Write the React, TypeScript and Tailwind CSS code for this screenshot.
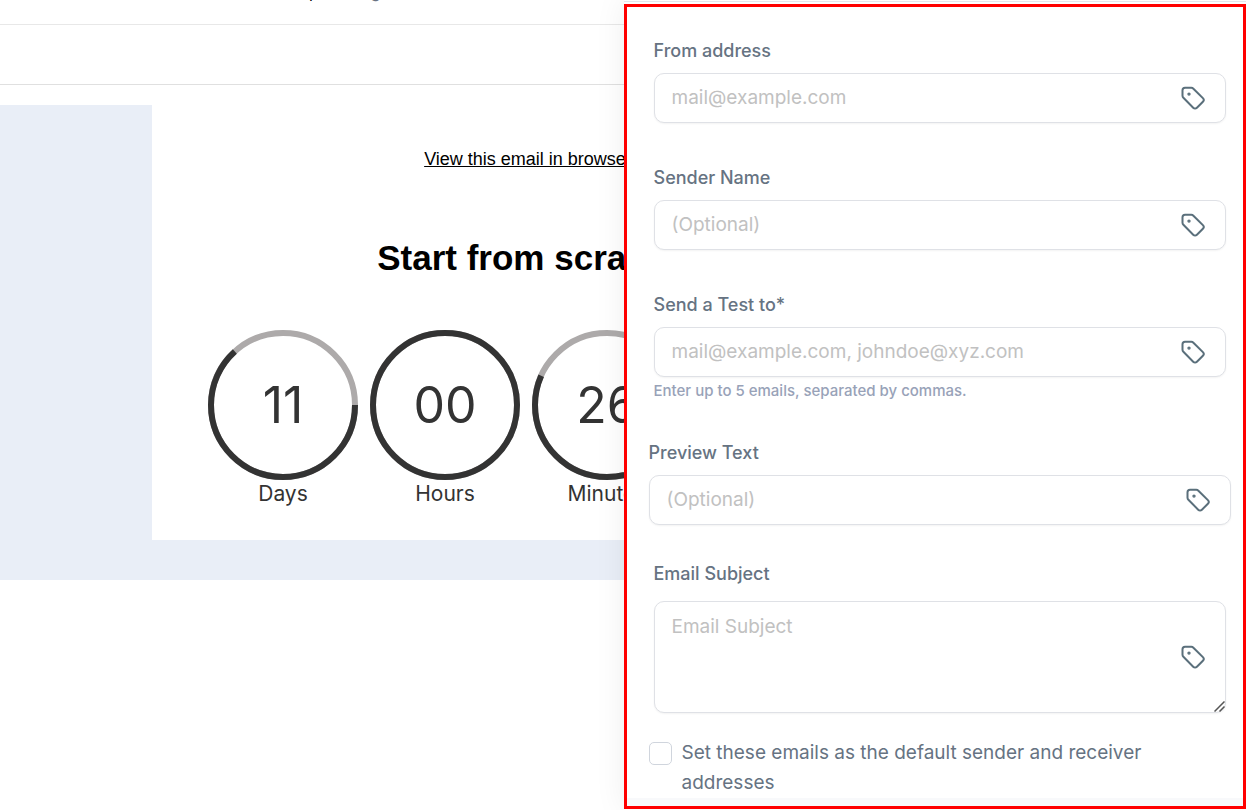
import React from "react";

const timers = [
  { value: "11", label: "Days", angle: 228 },
  { value: "00", label: "Hours", angle: 360 },
  { value: "26", label: "Minutes", angle: 204 },
  { value: "42", label: "Seconds", angle: 108 },
];

const TagIcon = () => (
  <svg
    width="26"
    height="26"
    viewBox="0 0 26 26"
    fill="none"
    stroke="#5a6f7b"
    strokeWidth="2"
    strokeLinecap="round"
    strokeLinejoin="round"
  >
    <path d="M2.5 5.3v5.4c0 .9.3 1.5.9 2.1l9.8 9.9c1.1 1.1 2.6 1.1 3.7 0l6-6c1.1-1.1 1.1-2.5 0-3.6L13.4 3.7c-.6-.6-1.2-.9-2.1-.9H5c-1.5 0-2.5 1-2.5 2.5Z" />
    <circle cx="9" cy="9.1" r="0.7" fill="#5a6f7b" />
  </svg>
);

type FieldProps = {
  id: string;
  label: string;
  placeholder: string;
  help?: string;
};

const Field = ({ id, label, placeholder, help }: FieldProps) => (
  <div className="flex flex-col">
    <label htmlFor={id} className="text-[18px] leading-6 font-medium text-[#667382]">
      {label}
    </label>
    <div className="mt-[10px] flex h-[50px] items-center rounded-[10px] border border-[#dfe1e6] bg-white pr-[19px] pl-[17px] shadow-xs">
      <input
        id={id}
        type="text"
        placeholder={placeholder}
        className="min-w-0 flex-1 text-[19px] text-[#667382] outline-none placeholder:text-[#c1c1c1]"
      />
      <button type="button" aria-label={`Insert tag in ${label}`}>
        <TagIcon />
      </button>
    </div>
    {help && (
      <p className="mt-1 text-[15px] leading-5 font-medium text-[#98a2b8]">{help}</p>
    )}
  </div>
);

const Timer = ({ value, label, angle }: { value: string; label: string; angle: number }) => (
  <div className="flex w-[150px] shrink-0 flex-col items-center text-[#333333]">
    <div className="grid h-[150px] w-[150px] place-items-center">
      <svg
        className="col-start-1 row-start-1"
        width="150"
        height="150"
        viewBox="0 0 150 150"
        fill="none"
        strokeWidth="6"
      >
        <circle cx="75" cy="75" r="72" stroke="#adaaaa" />
        <circle
          cx="75"
          cy="75"
          r="72"
          stroke="#333333"
          pathLength="360"
          strokeDasharray={`${angle} 360`}
        />
      </svg>
      <span className="col-start-1 row-start-1 text-[50px] leading-none">{value}</span>
    </div>
    <span className="text-[21px] leading-7">{label}</span>
  </div>
);

const EmailPreview = () => (
  <div className="min-w-0 flex-1 overflow-hidden bg-white">
    <div className="h-[25px] overflow-hidden border-b border-[#e8e8e8]">
      <div className="-mt-4 flex gap-[52px] pl-[309px] text-base leading-4">
        <span className="text-black">p</span>
        <span className="text-gray-500">g</span>
      </div>
    </div>
    <div className="h-[60px] border-b border-[#e0e0e0]" />
    <div className="mt-5 bg-[#e9eef7] pb-10 pl-[152px]">
      <div className="flex h-[435px] w-[752px] flex-col items-center bg-white pt-[42px] font-['Liberation_Sans',Arial,sans-serif] text-black">
        <a href="#" className="text-[18px] leading-6 underline">
          View this email in browser
        </a>
        <h1 className="mt-16 text-[35px] leading-[46px] font-bold">Start from scratch</h1>
        <div className="mt-[49px] flex gap-3 self-start pl-14 font-['Inter',sans-serif]">
          {timers.map((timer) => (
            <Timer key={timer.label} {...timer} />
          ))}
        </div>
      </div>
    </div>
  </div>
);

const SendTestPanel = () => (
  <form className="flex flex-1 flex-col border-[3px] border-[#ff0000] bg-white">
    <div className="flex flex-col pt-8 pr-3 pl-[22px]">
      <div className="flex flex-col gap-[43px] px-[5px]">
        <Field id="from" label="From address" placeholder="mail@example.com" />
        <Field id="sender" label="Sender Name" placeholder="(Optional)" />
        <Field
          id="recipients"
          label="Send a Test to*"
          placeholder="mail@example.com, johndoe@xyz.com"
          help="Enter up to 5 emails, separated by commas."
        />
      </div>
      <div className="mt-10">
        <Field id="preview" label="Preview Text" placeholder="(Optional)" />
      </div>
      <div className="mt-[37px] flex flex-col px-[5px]">
        <label htmlFor="subject" className="text-[18px] leading-6 font-medium text-[#667382]">
          Email Subject
        </label>
        <div className="relative mt-[15px] flex">
          <textarea
            id="subject"
            placeholder="Email Subject"
            className="h-28 w-full resize-none rounded-[10px] border border-[#dfe1e6] bg-white py-[10px] pr-14 pl-[17px] text-[19px] leading-[30px] text-[#667382] shadow-xs outline-none placeholder:text-[#c1c1c1]"
          />
          <button
            type="button"
            aria-label="Insert tag in Email Subject"
            className="absolute inset-y-0 right-5 flex items-center"
          >
            <TagIcon />
          </button>
          <svg
            className="pointer-events-none absolute right-px bottom-px"
            width="11"
            height="11"
            viewBox="0 0 11 11"
            stroke="#555555"
            strokeWidth="1.5"
          >
            <path d="M0.5 10.5l10-10M5.5 10.5l5-5" />
          </svg>
        </div>
      </div>
      <label className="mt-[25px] flex items-start gap-[10px] pr-16 text-[19px] leading-[30px] text-[#667382]">
        <input
          type="checkbox"
          className="mt-1 size-[23px] shrink-0 appearance-none rounded-[5px] border border-[#d0d5dd] bg-white checked:bg-slate-500"
        />
        <span>Set these emails as the default sender and receiver addresses</span>
      </label>
    </div>
    <div className="flex-1 bg-[#f8f9fb]" />
  </form>
);

export default function App() {
  return (
    <div className="flex h-screen overflow-hidden bg-white font-['Inter',sans-serif]">
      <EmailPreview />
      <div className="relative flex w-1/2 flex-col bg-white pr-px pb-px shadow-[0_0_30px_rgba(0,0,0,0.07)]">
        <div className="mb-[2px] h-[2px] border-b border-[#e4e7ec]" />
        <SendTestPanel />
      </div>
    </div>
  );
}
